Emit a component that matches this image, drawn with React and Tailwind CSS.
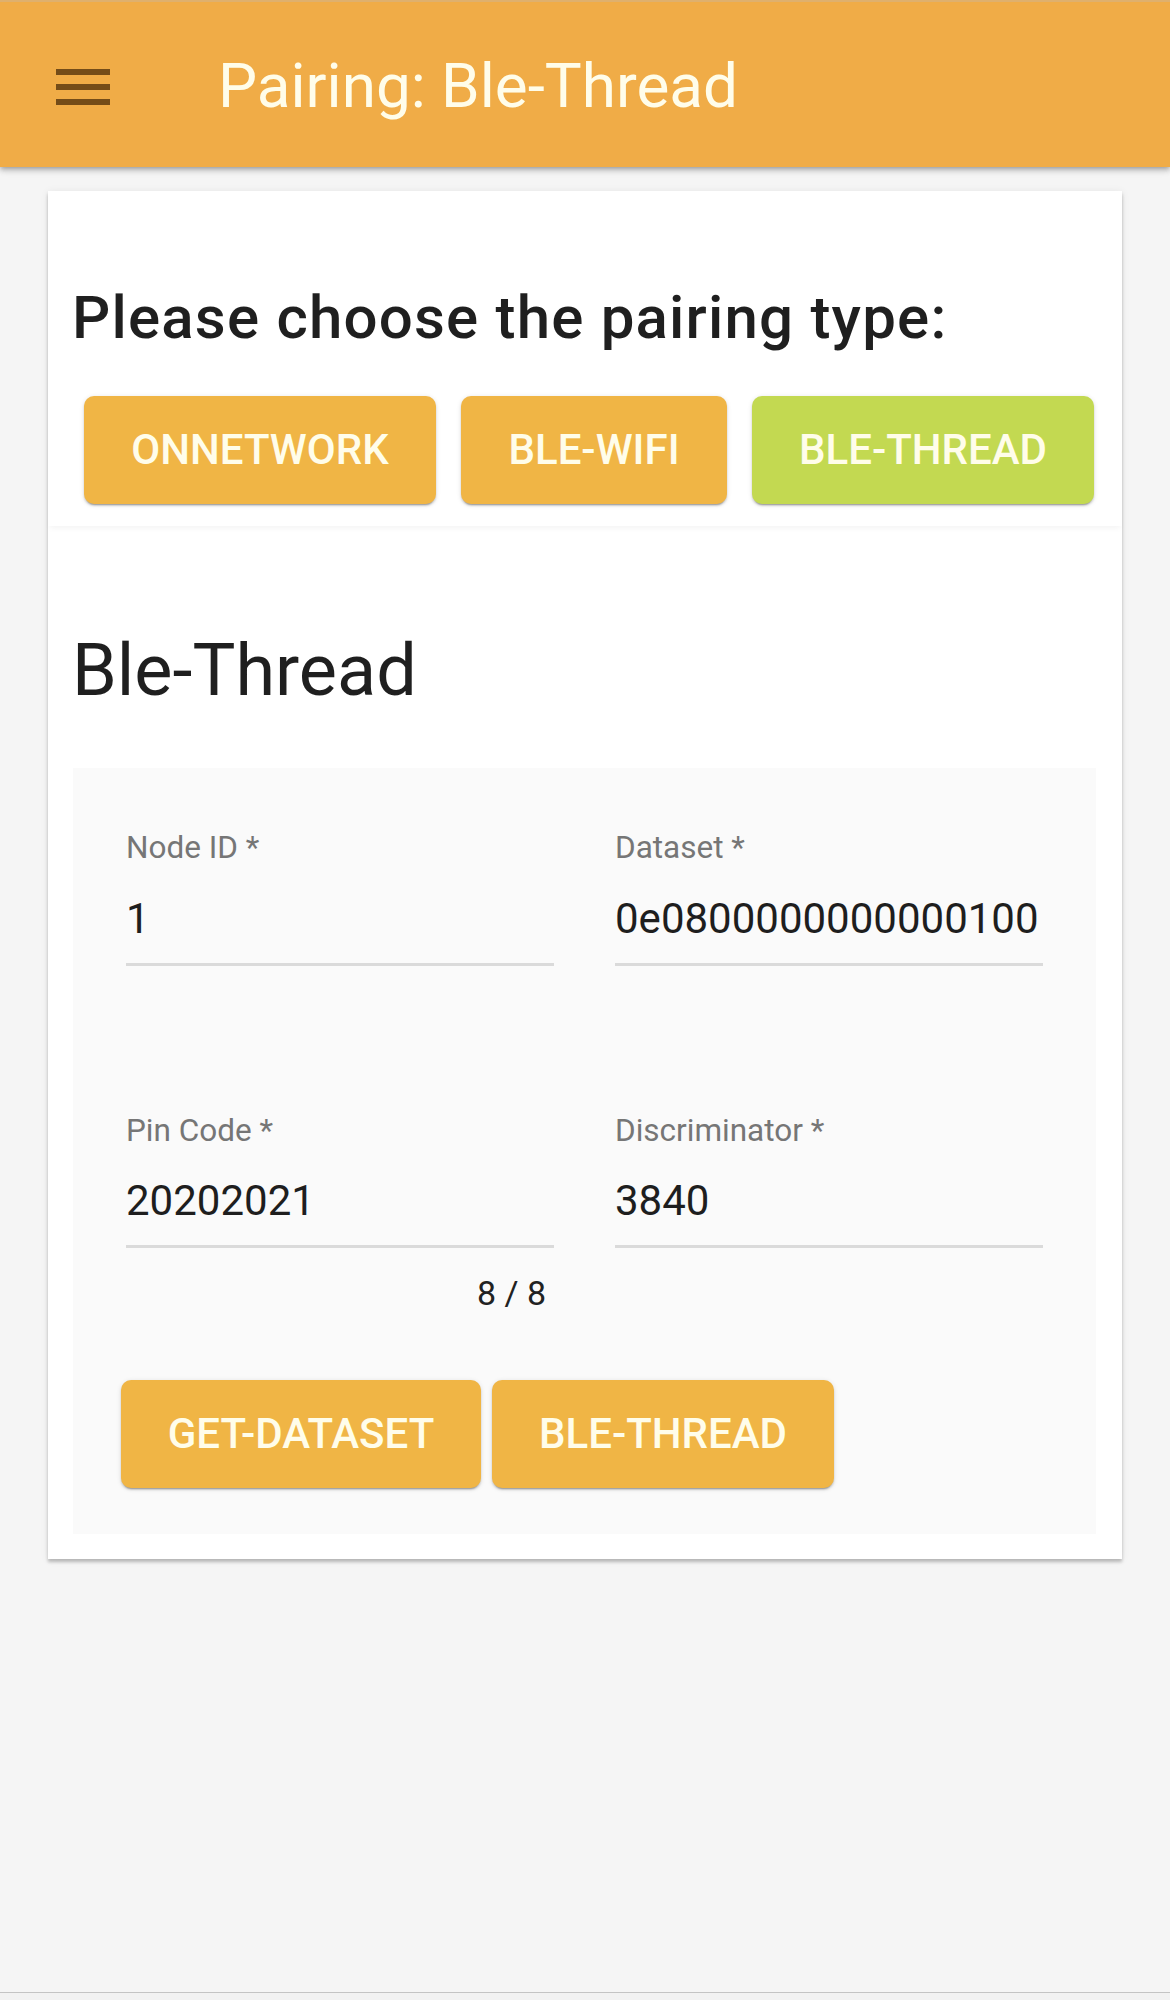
import React from "react";

function MenuIcon() {
  return (
    <svg width="72" height="72" viewBox="0 0 24 24" className="block">
      <path d="M3 18h18v-2H3v2zm0-5h18v-2H3v2zm0-7v2h18V6H3z" fill="#744c18" />
    </svg>
  );
}

function Btn({ children, w, green }) {
  return (
    <button
      className={
        "h-[108px] rounded-[10px] text-[42px] leading-none font-medium text-[#fffdea] uppercase flex items-center justify-center shrink-0 shadow-[0_3px_1px_-2px_rgba(0,0,0,0.2),0_2px_2px_0_rgba(0,0,0,0.14),0_1px_5px_0_rgba(0,0,0,0.12)] " +
        (green ? "bg-[#c3d951]" : "bg-[#f0b545]")
      }
      style={{ width: w }}
    >
      {children}
    </button>
  );
}

function Field({ label, value, helper }) {
  return (
    <div className="flex flex-col w-[428px]">
      <div className="text-[31.5px] leading-[31.5px] text-[#767676]">{label}</div>
      <div className="mt-[34px] text-[42px] leading-[42px] text-[#1e1e1e]">{value}</div>
      <div className="mt-[23px] h-[3px] bg-[#dadada]" />
      {helper && (
        <div className="mt-[28px] pr-[8px] text-right text-[34px] leading-[34px] text-[#222]">{helper}</div>
      )}
    </div>
  );
}

export default function App() {
  return (
    <div
      className="min-h-[2000px] bg-[#f5f5f5] flex flex-col"
      style={{ fontFamily: "Roboto, 'Noto Sans', sans-serif" }}
    >
      <header className="h-[167px] bg-[#f0ac47] border-t-2 border-[#dfb06d] flex items-center shadow-[0_2px_4px_-1px_rgba(0,0,0,0.2),0_4px_5px_0_rgba(0,0,0,0.14),0_1px_10px_0_rgba(0,0,0,0.12)] relative z-10">
        <div className="ml-[47px] mt-[4px]">
          <MenuIcon />
        </div>
        <div className="ml-[99px] mt-[2px] text-[62px] leading-[62px] text-[#fffdea]">Pairing: Ble-Thread</div>
      </header>

      <div className="mx-[48px] mt-[24px] bg-white shadow-[0_3px_3px_rgba(0,0,0,0.22),0_1px_8px_rgba(0,0,0,0.08)]">
        <section className="px-[24px] pb-[22px] shadow-[0_4px_6px_-2px_rgba(0,0,0,0.05)] relative">
          <h2 className="pt-[97px] text-[60px] leading-[60px] font-medium tracking-[1.2px] text-[#1f1f1f] whitespace-nowrap">
            Please choose the pairing type:
          </h2>
          <div className="mt-[48px] ml-[12px] flex gap-[25px]">
            <Btn w={352}>OnNetwork</Btn>
            <Btn w={266}>Ble-Wifi</Btn>
            <Btn w={342} green>Ble-Thread</Btn>
          </div>
        </section>

        <section className="px-[24px] pb-[25px]">
          <h3 className="pt-[109px] text-[72px] leading-[72px] text-[#1f1f1f]">Ble-Thread</h3>
          <div className="mt-[61px] bg-[#fafafa] pt-[64px] pb-[46px] ml-[1px] mr-[2px]">
            <div className="pl-[53px] grid grid-cols-[428px_428px] gap-x-[61px] gap-y-[149px]">
              <Field label="Node ID *" value="1" />
              <Field label="Dataset *" value="0e0800000000000100" />
              <Field label="Pin Code *" value="20202021" helper="8 / 8" />
              <Field label="Discriminator *" value="3840" />
            </div>
            <div className="mt-[70px] pl-[48px] flex gap-[11px]">
              <Btn w={360}>Get-Dataset</Btn>
              <Btn w={342}>Ble-Thread</Btn>
            </div>
          </div>
        </section>
      </div>

      <div className="mt-auto h-[8px] border-t border-[#c4c4c4] bg-[#f2f2f2]" />
    </div>
  );
}
